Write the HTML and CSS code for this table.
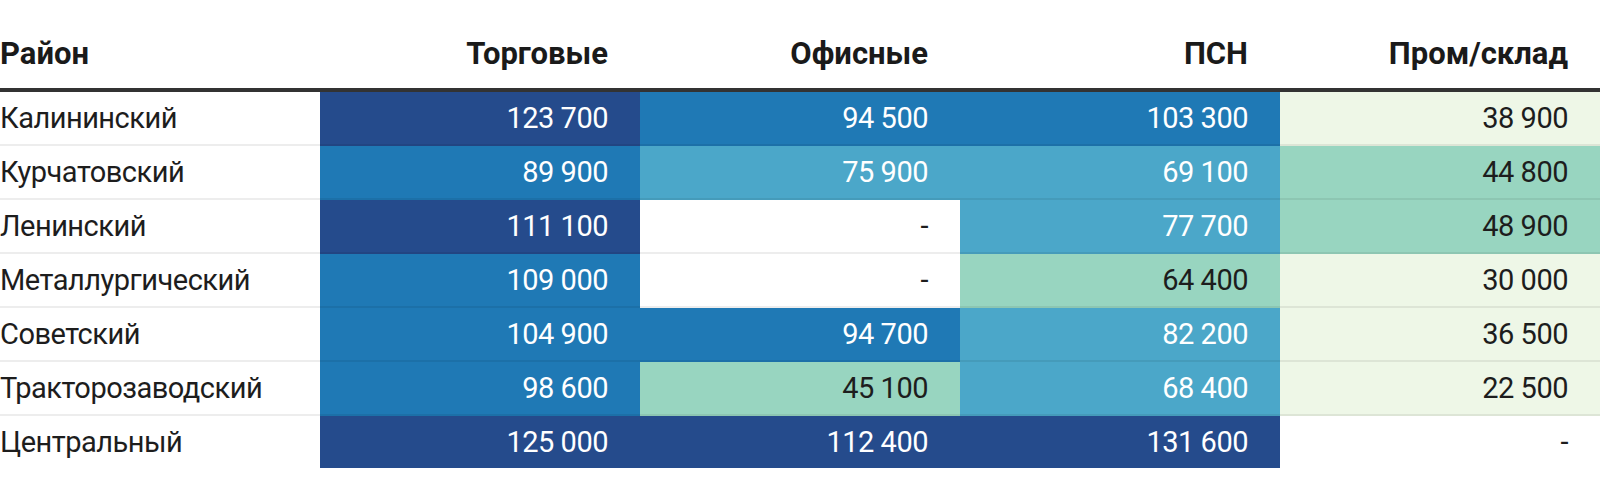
FILE: index.html
```html
<!DOCTYPE html>
<html lang="ru">
<head>
<meta charset="utf-8">
<title>Ставки аренды по районам</title>
<link rel="stylesheet" href="styles.css">
</head>
<body>
<table class="heat">
  <thead>
    <tr>
      <th class="name">Район</th>
      <th>Торговые</th>
      <th>Офисные</th>
      <th>ПСН</th>
      <th>Пром/склад</th>
    </tr>
  </thead>
  <tbody>
    <tr>
      <td class="name">Калининский</td>
      <td class="c5">123&nbsp;700</td>
      <td class="c4">94&nbsp;500</td>
      <td class="c4">103&nbsp;300</td>
      <td class="c1">38&nbsp;900</td>
    </tr>
    <tr>
      <td class="name">Курчатовский</td>
      <td class="c4">89&nbsp;900</td>
      <td class="c3">75&nbsp;900</td>
      <td class="c3">69&nbsp;100</td>
      <td class="c2">44&nbsp;800</td>
    </tr>
    <tr>
      <td class="name">Ленинский</td>
      <td class="c5">111&nbsp;100</td>
      <td class="c0">-</td>
      <td class="c3">77&nbsp;700</td>
      <td class="c2">48&nbsp;900</td>
    </tr>
    <tr>
      <td class="name">Металлургический</td>
      <td class="c4">109&nbsp;000</td>
      <td class="c0">-</td>
      <td class="c2">64&nbsp;400</td>
      <td class="c1">30&nbsp;000</td>
    </tr>
    <tr>
      <td class="name">Советский</td>
      <td class="c4">104&nbsp;900</td>
      <td class="c4">94&nbsp;700</td>
      <td class="c3">82&nbsp;200</td>
      <td class="c1">36&nbsp;500</td>
    </tr>
    <tr>
      <td class="name">Тракторозаводский</td>
      <td class="c4">98&nbsp;600</td>
      <td class="c2">45&nbsp;100</td>
      <td class="c3">68&nbsp;400</td>
      <td class="c1">22&nbsp;500</td>
    </tr>
    <tr>
      <td class="name">Центральный</td>
      <td class="c5">125&nbsp;000</td>
      <td class="c5">112&nbsp;400</td>
      <td class="c5">131&nbsp;600</td>
      <td class="c0">-</td>
    </tr>
  </tbody>
</table>
</body>
</html>
```
FILE: styles.css
```css
html, body {
  margin: 0;
  padding: 0;
  background: #ffffff;
}

body {
  font-family: Roboto, "Liberation Sans", sans-serif;
  color: #1d1d1d;
}

.heat {
  width: 1600px;
  table-layout: fixed;
  border-collapse: separate;
  border-spacing: 0;
}

.heat th,
.heat td {
  width: 320px;
  padding: 0 32px 0 0;
  text-align: right;
  line-height: 36px;
  white-space: nowrap;
  box-sizing: border-box;
}

.heat th {
  height: 92px;
  font-size: 31px;
  font-weight: 700;
  vertical-align: bottom;
  padding-bottom: 16px;
  border-bottom: 4px solid #333333;
  color: #1a1a1a;
}

.heat td {
  height: 54px;
  font-size: 29px;
  letter-spacing: -0.5px;
  font-weight: 400;
  vertical-align: middle;
  border-bottom: 2px solid rgba(0, 0, 0, 0.07);
}

.heat tbody tr:last-child td {
  height: 52px;
  border-bottom: none;
}

.heat .name {
  text-align: left;
  padding-left: 0;
}

.c0 { background: #ffffff; color: #1d1d1d; }
.c1 { background: #eef7e7; color: #1d1d1d; }
.c2 { background: #98d5c0; color: #1d1d1d; }
.c3 { background: #4ba7c9; color: #ffffff; }
.c4 { background: #1f79b5; color: #ffffff; }
.c5 { background: #254b8c; color: #ffffff; }
```
